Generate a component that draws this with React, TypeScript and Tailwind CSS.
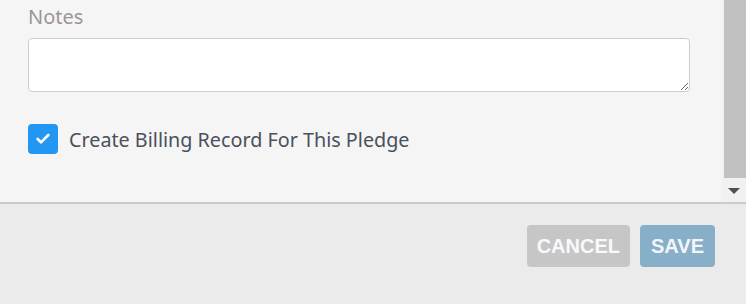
import { Check } from 'lucide-react';

const App = () => {
  return (
    <div className="w-[746px] h-[304px] flex flex-col bg-[#ebebeb] overflow-hidden" style={{ fontFamily: '"Segoe UI", "Noto Sans", sans-serif' }}>
      {/* Scrollable form area */}
      <div className="h-[204px] flex border-b-2 border-[#cbcbcb] bg-[#f5f5f5]">
        <div className="flex-1 pl-[28px] pr-[32px] pt-[3px]">
          <label className="block text-[20px] leading-[28px] text-[#9d9595]">Notes</label>
          <textarea
            className="mt-[7px] block w-[662px] h-[54px] bg-white border border-[#cccccc] rounded-[4px] outline-none"
          />
          <div className="mt-[31px] flex items-center gap-[11px]">
            <div className="w-[30px] h-[30px] rounded-[4px] bg-[#2196f3] flex items-center justify-center">
              <Check size={16} strokeWidth={4} className="text-white" />
            </div>
            <span className="pt-[3px] text-[19.75px] leading-[28px] text-[#4a505c]">Create Billing Record For This Pledge</span>
          </div>
        </div>

        {/* Scrollbar */}
        <div className="w-[24px] flex flex-col bg-[#f1f1f1] pl-[2px]">
          <div className="h-[178px] bg-[#c1c1c1]" />
          <div className="flex-1 flex items-center justify-center pr-[2px] pt-[2px]">
            <div className="w-0 h-0 border-l-[6px] border-r-[6px] border-t-[6px] border-l-transparent border-r-transparent border-t-[#505050]" />
          </div>
        </div>
      </div>

      {/* Footer actions */}
      <div className="flex-1 flex justify-end items-start pt-[21px] pr-[31px] gap-[10px]">
        <button className="h-[42px] px-[10px] rounded-[4px] bg-[#c6c6c6] text-[#f7f9fc] text-[20px] font-bold" style={{ fontFamily: '"Liberation Sans", Arial, sans-serif' }}>
          CANCEL
        </button>
        <button className="h-[42px] px-[11px] rounded-[4px] bg-[#87afc8] text-[#f2f6fa] text-[20px] font-bold" style={{ fontFamily: '"Liberation Sans", Arial, sans-serif' }}>
          SAVE
        </button>
      </div>
    </div>
  );
};

export default App;
